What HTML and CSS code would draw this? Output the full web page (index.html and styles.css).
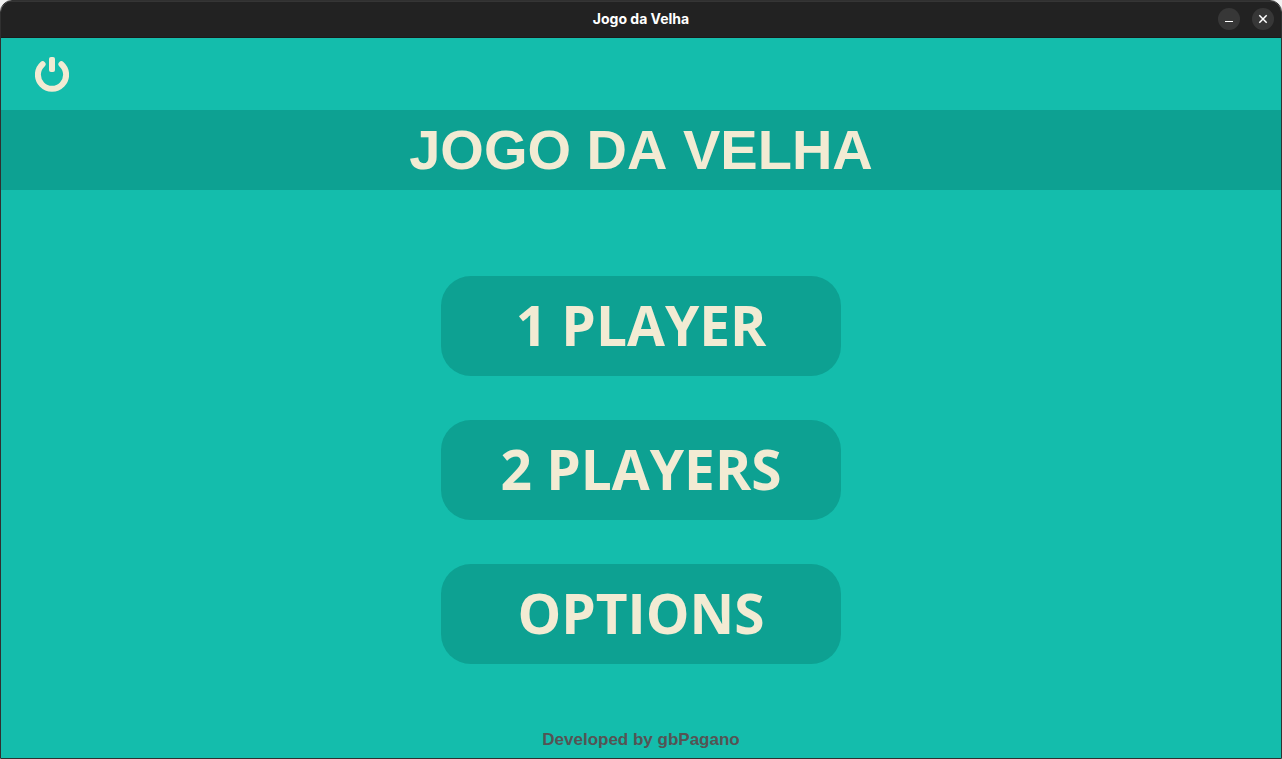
FILE: index.html
```html
<!DOCTYPE html>
<html lang="pt-BR">
<head>
<meta charset="utf-8">
<meta name="viewport" content="width=device-width, initial-scale=1">
<title>Jogo da Velha</title>
<link rel="stylesheet" href="styles.css">
</head>
<body>
<div class="window">
  <header class="titlebar">
    <span class="titlebar-name">Jogo da Velha</span>
    <div class="titlebar-controls">
      <button class="control" type="button" aria-label="Minimize">
        <svg width="22" height="22" viewBox="0 0 22 22" aria-hidden="true"><path d="M7 13.5h8" stroke="currentColor"/></svg>
      </button>
      <button class="control" type="button" aria-label="Close">
        <svg width="22" height="22" viewBox="0 0 22 22" aria-hidden="true"><path d="M7.3 7.3l7.4 7.4M14.7 7.3l-7.4 7.4" stroke="currentColor" stroke-width="1.5"/></svg>
      </button>
    </div>
  </header>
  <main class="game">
    <nav class="toolbar">
      <button class="power" type="button" aria-label="Quit">
        <svg width="34" height="36" viewBox="0 0 34 36" fill="none" stroke="currentColor" stroke-width="6" stroke-linecap="round" aria-hidden="true">
          <path d="M7.6 8.2A14.1 14.1 0 1 0 26.4 8.2"/>
          <rect x="14" y="1" width="6" height="15" rx="2" fill="currentColor" stroke="none"/>
        </svg>
      </button>
    </nav>
    <h1 class="banner">JOGO DA VELHA</h1>
    <div class="menu">
      <button class="menu-item" type="button">1 PLAYER</button>
      <button class="menu-item" type="button">2 PLAYERS</button>
      <button class="menu-item" type="button">OPTIONS</button>
    </div>
    <footer class="credit">Developed by gbPagano</footer>
  </main>
</div>
</body>
</html>
```
FILE: styles.css
```css
* {
  box-sizing: border-box;
}

body {
  margin: 0;
  background: #f2f2f2;
  font-family: "Liberation Sans", Arial, sans-serif;
}

button {
  padding: 0;
  border: 0;
  font: inherit;
  cursor: pointer;
}

svg {
  display: block;
}

.window {
  display: flex;
  flex-direction: column;
  min-height: 100vh;
  border: 1px solid #303030;
  border-radius: 12px 12px 0 0;
  overflow: hidden;
}

.titlebar {
  display: grid;
  grid-template-columns: 1fr auto 1fr;
  align-items: center;
  height: 37px;
  padding: 0 7px 2px;
  background: #222;
  border-top: 1px solid #353535;
  border-bottom: 1px solid #1b1b1b;
  color: #fff;
}

.titlebar-name {
  grid-column: 2;
  font: bold 14px/20px Inter, sans-serif;
}

.titlebar-controls {
  display: flex;
  justify-content: flex-end;
  gap: 12px;
}

.control {
  border-radius: 50%;
  background: #373737;
  color: #fff;
}

.game {
  display: flex;
  flex: 1;
  flex-direction: column;
  background: #14bdac;
}

.toolbar {
  display: flex;
  align-items: center;
  height: 72px;
  padding: 0 34px;
}

.power {
  background: none;
  color: #f2ebd3;
}

.banner {
  margin: 0;
  background: #0da192;
  color: #f2ebd3;
  font-size: 56px;
  line-height: 80px;
  font-kerning: none;
  text-align: center;
}

.menu {
  display: flex;
  flex: 1;
  flex-direction: column;
  align-items: center;
  gap: 44px;
  padding: 86px 16px 44px;
}

.menu-item {
  width: 400px;
  max-width: 100%;
  height: 100px;
  padding-bottom: 2px;
  border-radius: 30px;
  background: #0da192;
  color: #f2ebd3;
  font: bold 55px/80px "Open Sans", "Noto Sans", sans-serif;
}

.credit {
  padding: 9px 0 7px;
  color: #545454;
  font-size: 17px;
  font-weight: bold;
  line-height: 22px;
  text-align: center;
}
```
